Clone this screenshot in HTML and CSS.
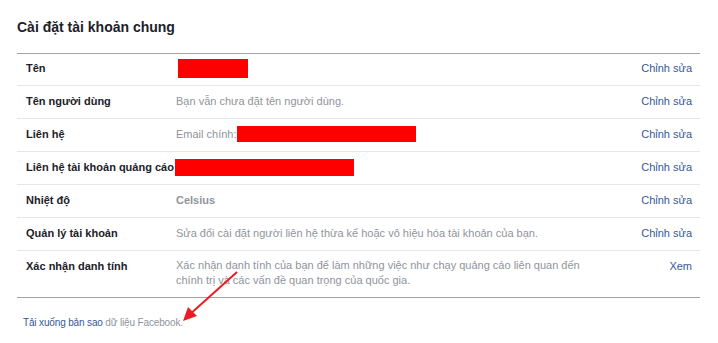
FILE: index.html
```html
<!DOCTYPE html>
<html lang="vi">
<head>
  <meta charset="UTF-8" />
  <title>Cài đặt tài khoản chung</title>
  <link rel="stylesheet" href="styles.css">
</head>
<body>
  <div class="settings">
    <h2 class="title">Cài đặt tài khoản chung</h2>

    <div class="rows">
      <div class="row">
        <div class="label">Tên</div>
        <div class="value"><span class="redact redact-name"></span></div>
        <a class="action">Chỉnh sửa</a>
      </div>
      <div class="row">
        <div class="label">Tên người dùng</div>
        <div class="value">Bạn vẫn chưa đặt tên người dùng.</div>
        <a class="action">Chỉnh sửa</a>
      </div>
      <div class="row">
        <div class="label">Liên hệ</div>
        <div class="value">Email chính:<span class="redact redact-email"></span></div>
        <a class="action">Chỉnh sửa</a>
      </div>
      <div class="row">
        <div class="label">Liên hệ tài khoản quảng cáo</div>
        <div class="value"><span class="redact redact-ads"></span></div>
        <a class="action">Chỉnh sửa</a>
      </div>
      <div class="row">
        <div class="label">Nhiệt độ</div>
        <div class="value strong">Celsius</div>
        <a class="action">Chỉnh sửa</a>
      </div>
      <div class="row">
        <div class="label">Quản lý tài khoản</div>
        <div class="value">Sửa đổi cài đặt người liên hệ thừa kế hoặc vô hiệu hóa tài khoản của bạn.</div>
        <a class="action">Chỉnh sửa</a>
      </div>
      <div class="row">
        <div class="label">Xác nhận danh tính</div>
        <div class="value wrap">Xác nhận danh tính của bạn để làm những việc như chạy quảng cáo liên quan đến chính trị và các vấn đề quan trọng của quốc gia.</div>
        <a class="action">Xem</a>
      </div>
    </div>

    <div class="footer">
      <a class="download">Tải xuống bản sao</a> dữ liệu Facebook.
    </div>
  </div>

  <!-- red annotation arrow -->
  <svg class="arrow" width="718" height="343" viewBox="0 0 718 343">
    <line x1="237" y1="272" x2="188" y2="316" stroke="#ec1c24" stroke-width="2" />
    <polygon points="183,321 188,307 197,316" fill="#ec1c24" />
  </svg>
</body>
</html>
```

FILE: styles.css
```css
body {
  margin: 0;
  padding: 0;
  background: #fff;
  font-family: "Liberation Sans", Arial, sans-serif;
  font-size: 11px;
  color: #1d2129;
}

.settings {
  width: 683px;
  padding: 19px 0 0 17px;
}

.title {
  margin: 0 0 18px;
  font-size: 14px;
  font-weight: bold;
  line-height: 16px;
  color: #1d2129;
}

.rows {
  border-top: 1px solid #a3a3a3;
  border-bottom: 1px solid #a3a3a3;
}

.row {
  display: grid;
  grid-template-columns: 150px 1fr auto;
  padding: 7px 8px 9px 9px;
  line-height: 16px;
  border-top: 1px solid #e5e6e9;
}

.row:first-child {
  border-top: none;
  padding-top: 6px;
}

.label {
  font-weight: bold;
  color: #1d2129;
  white-space: nowrap;
}

.value {
  color: #90949c;
  display: flex;
  align-items: center;
  white-space: nowrap;
  height: 16px;
}

.value.strong {
  font-weight: bold;
}

.value.wrap {
  display: block;
  height: auto;
  white-space: normal;
  line-height: 15px;
  max-width: 412px;
}

.action {
  color: #365899;
  text-decoration: none;
  text-align: right;
  padding-left: 10px;
}

.redact {
  display: inline-block;
  flex: none;
  background: #ff0000;
}

.redact-name {
  width: 70px;
  height: 19px;
  margin-left: 2px;
  margin-top: 1px;
}

.redact-email {
  width: 179px;
  height: 16px;
}

.redact-ads {
  width: 179px;
  height: 17px;
  margin-left: -1px;
}

.footer {
  padding: 19px 0 0 6px;
  font-size: 10px;
  letter-spacing: -0.15px;
  color: #90949c;
}

.download {
  color: #365899;
  text-decoration: none;
}

.arrow {
  position: absolute;
  left: 0;
  top: 0;
  pointer-events: none;
}
```
